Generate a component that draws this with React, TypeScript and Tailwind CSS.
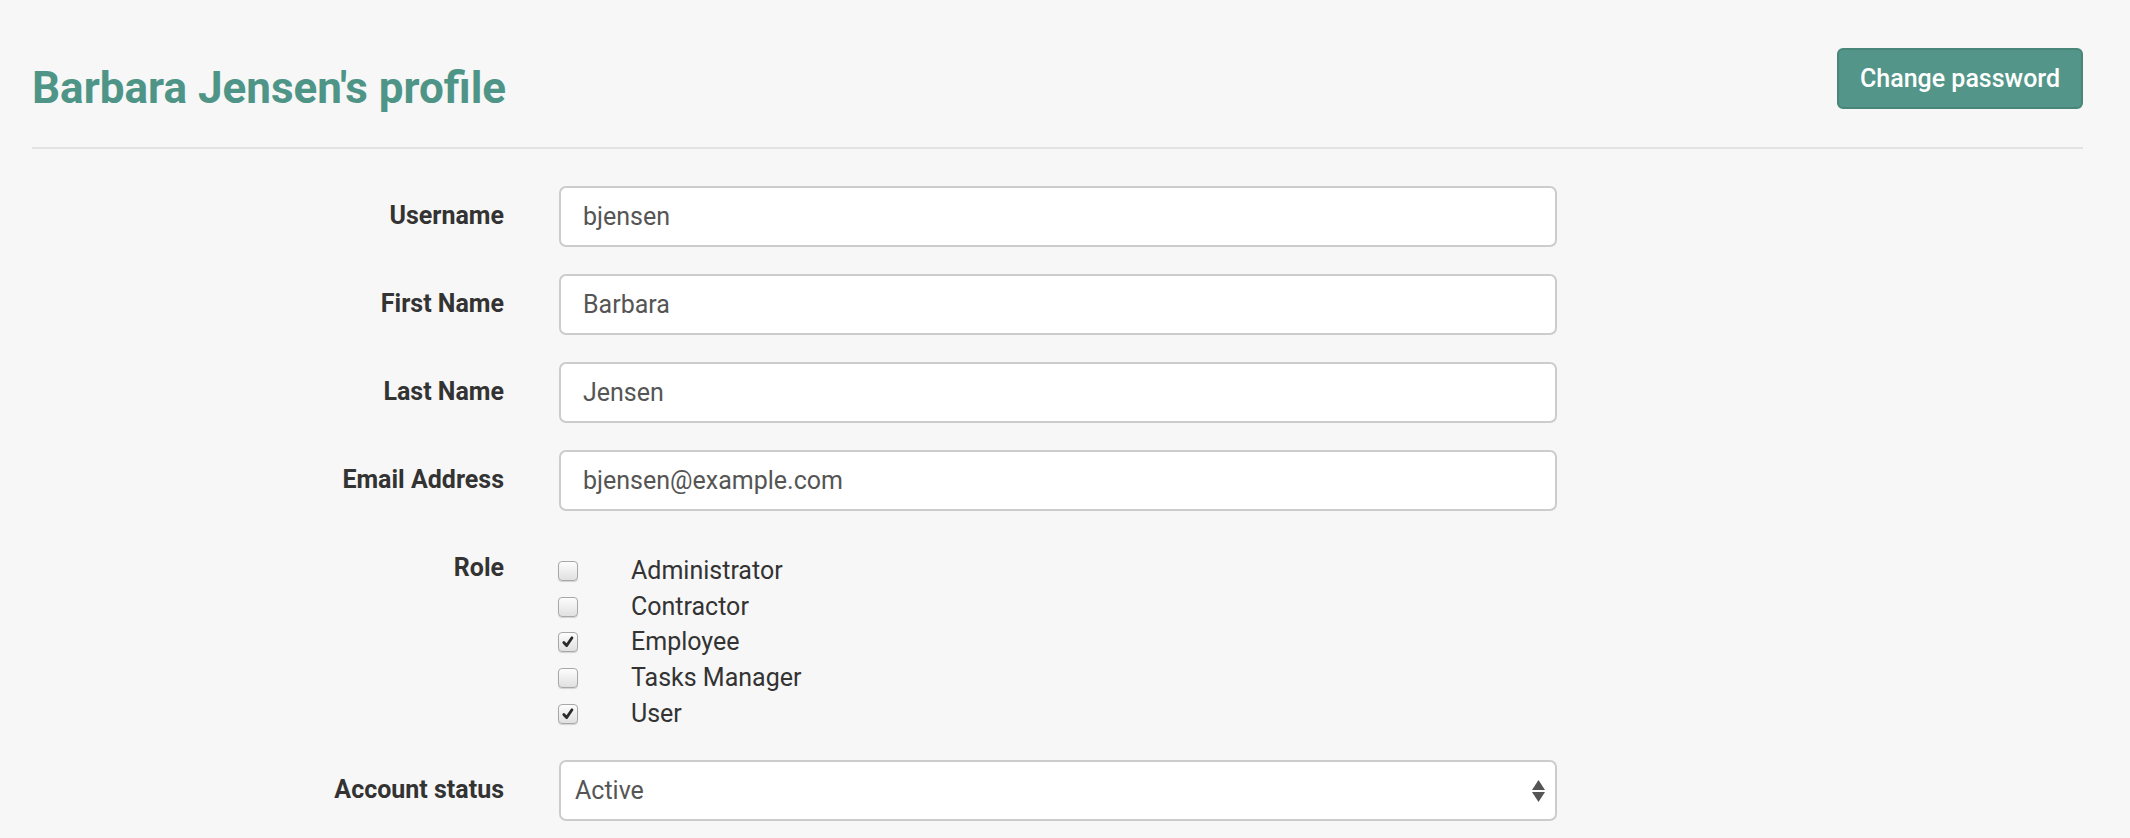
import React from "react";

const fields = [
  { label: "Username", value: "bjensen" },
  { label: "First Name", value: "Barbara" },
  { label: "Last Name", value: "Jensen" },
  { label: "Email Address", value: "bjensen@example.com" },
];

const roles = [
  { name: "Administrator", checked: false },
  { name: "Contractor", checked: false },
  { name: "Employee", checked: true },
  { name: "Tasks Manager", checked: false },
  { name: "User", checked: true },
];

function Checkbox({ checked }: { checked: boolean }) {
  return (
    <div className="w-[20px] h-[20px] rounded-[4px] border border-[#a8a8a8] bg-gradient-to-b from-[#fdfdfd] to-[#e0e0e0] shadow-[0_1px_1px_rgba(0,0,0,0.15)] flex items-center justify-center">
      {checked && (
        <svg width="14" height="14" viewBox="0 0 14 14">
          <path d="M2.8 7.5 L5.6 10.6 L11 2.8" fill="none" stroke="#2a2a2a" strokeWidth="2.8" strokeLinecap="round" strokeLinejoin="round" />
        </svg>
      )}
    </div>
  );
}

export default function App() {
  return (
    <div className="min-h-screen bg-[#f7f7f7] font-['Roboto',sans-serif]">
      <div className="ml-[32px] w-[2051px]">
        <div className="flex items-start justify-between pt-[48px] pb-[35px] border-b-2 border-[#e3e3e3]">
          <h1 className="mt-[17px] text-[44px] leading-[47px] font-bold text-[#4f9587]">
            Barbara Jensen's profile
          </h1>
          <button className="h-[61px] w-[246px] rounded-[6px] bg-[#539689] border-2 border-[#478678] text-white text-[25px] font-medium leading-none">
            Change password
          </button>
        </div>

        <div className="pt-[37px]">
          {fields.map((f) => (
            <div key={f.label} className="flex mb-[27px]">
              <div className="w-[472px] text-right pt-[12px] text-[25px] leading-[36px] font-bold text-[#333333]">
                {f.label}
              </div>
              <div className="ml-[55px] w-[998px] h-[61px] rounded-[7px] border-2 border-[#cccccc] bg-white flex items-center pl-[22px] text-[25px] text-[#555555]">
                {f.value}
              </div>
            </div>
          ))}

          <div className="flex">
            <div className="w-[472px] text-right pt-[12px] text-[25px] leading-[36px] font-bold text-[#333333]">
              Role
            </div>
            <div className="ml-[54px] pt-[15px] flex flex-col">
              {roles.map((r) => (
                <div key={r.name} className="flex items-center h-[35.7px]">
                  <Checkbox checked={r.checked} />
                  <span className="ml-[53px] text-[25px] text-[#333333] leading-[35.7px]">{r.name}</span>
                </div>
              ))}
            </div>
          </div>

          <div className="flex mt-[29px]">
            <div className="w-[472px] text-right pt-[12px] text-[25px] leading-[36px] font-bold text-[#333333]">
              Account status
            </div>
            <div className="relative ml-[55px] w-[998px] h-[61px] rounded-[7px] border-2 border-[#cccccc] bg-white flex items-center pl-[14px] text-[25px] text-[#555555]">
              Active
              <svg className="absolute right-[10px] top-[18px]" width="13" height="23" viewBox="0 0 13 23">
                <polygon points="6.5,0 13,10 0,10" fill="#555555" />
                <polygon points="0,12 13,12 6.5,22" fill="#555555" />
              </svg>
            </div>
          </div>
        </div>
      </div>
    </div>
  );
}
